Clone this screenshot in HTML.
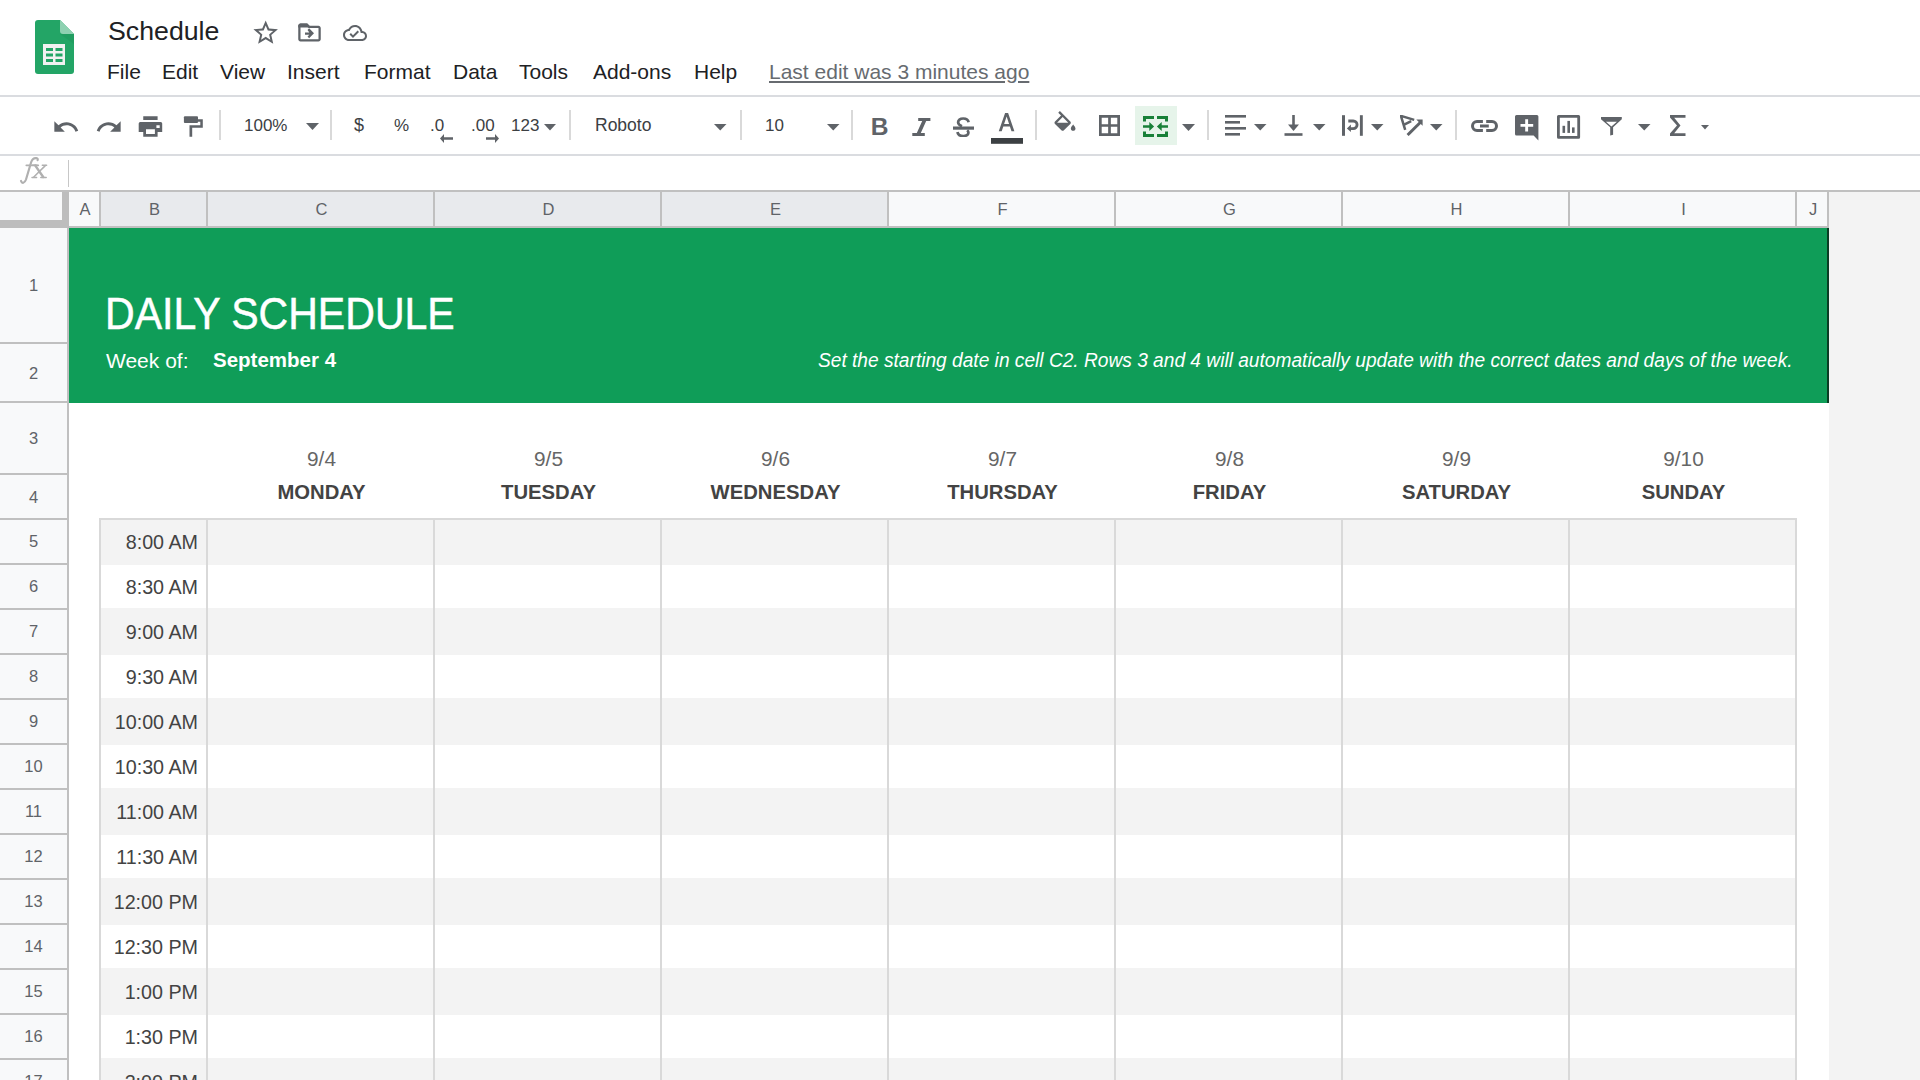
<!DOCTYPE html>
<html><head><meta charset="utf-8"><style>
html,body{margin:0;padding:0;}
body{width:1920px;height:1080px;overflow:hidden;position:relative;background:#fff;font-family:"Liberation Sans", sans-serif;}
.t{position:absolute;white-space:nowrap;}
.r{position:absolute;}
</style></head><body>
<svg class="r" style="left:35px;top:20px;" width="39" height="54" viewBox="0 0 39 54">
<path d="M3 0H25L39 14V51A3 3 0 0 1 36 54H3A3 3 0 0 1 0 51V3A3 3 0 0 1 3 0Z" fill="#23a566"/>
<path d="M25 0L39 14H28A3 3 0 0 1 25 11Z" fill="#8ed1b1"/>
<path d="M25 14L39 24V14Z" fill="#1e8e55" opacity="0.35"/>
<rect x="8" y="24" width="22" height="21" fill="#f1f1f1"/>
<rect x="11" y="28" width="7" height="3" fill="#23a566"/><rect x="20.5" y="28" width="7" height="3" fill="#23a566"/>
<rect x="11" y="33.5" width="7" height="3" fill="#23a566"/><rect x="20.5" y="33.5" width="7" height="3" fill="#23a566"/>
<rect x="11" y="39" width="7" height="3" fill="#23a566"/><rect x="20.5" y="39" width="7" height="3" fill="#23a566"/>
</svg>
<div class="t" style="left:108px;top:17.29px;font-size:26.2px;line-height:29.27px;color:#202124;transform:scaleX(1.02);transform-origin:left top;">Schedule</div>
<svg class="r" style="left:250.6px;top:17.5px;" width="29.4" height="29.4" viewBox="0 0 24 24"><path fill="#5f6368" d="M22 9.24l-7.19-.62L12 2 9.19 8.63 2 9.24l5.46 4.73L5.82 21 12 17.27 18.18 21l-1.63-7.03L22 9.24zM12 15.4l-3.76 2.27 1-4.28-3.32-2.88 4.38-.38L12 6.1l1.71 4.04 4.38.38-3.32 2.88 1 4.28L12 15.4z"/></svg>
<svg class="r" style="left:296.3px;top:19px;" width="27" height="27" viewBox="0 0 24 24"><path fill="#5f6368" d="M2 6c0-1.1.9-2 2-2h6l2 2v1.6H2z"/><path fill="#5f6368" d="M20 6h-8l-2-2H4c-1.1 0-1.99.9-1.99 2L2 18c0 1.1.9 2 2 2h16c1.1 0 2-.9 2-2V8c0-1.1-.9-2-2-2zm0 12H4V6h5.17l2 2H20v10zm-8.16-6H8v2h3.84l-1.59 1.59L11.66 17 16 12.66 11.66 8.3l-1.41 1.41L11.84 12z"/></svg>
<svg class="r" style="left:343px;top:21px;" width="24" height="24" viewBox="0 0 24 24"><path fill="#5f6368" d="M19.35 10.04C18.67 6.59 15.64 4 12 4 9.11 4 6.6 5.64 5.35 8.04 2.34 8.36 0 10.91 0 14c0 3.31 2.69 6 6 6h13c2.76 0 5-2.24 5-5 0-2.64-2.05-4.78-4.65-4.96zM19 18H6c-2.21 0-4-1.790-4-4 0-2.05 1.53-3.76 3.56-3.97l1.07-.11.5-.95C8.08 7.14 9.94 6 12 6c2.62 0 4.88 1.86 5.39 4.43l.3 1.5 1.530.11c1.56.1 2.78 1.41 2.78 2.96 0 1.65-1.35 3-3 3zm-9-3.82l-2.09-2.09L6.5 13.5 10 17l6.01-6.01-1.41-1.410z"/></svg>
<div class="t" style="left:107px;top:59.75px;font-size:21px;line-height:23.46px;color:#202124;">File</div>
<div class="t" style="left:162px;top:59.75px;font-size:21px;line-height:23.46px;color:#202124;">Edit</div>
<div class="t" style="left:220px;top:59.75px;font-size:21px;line-height:23.46px;color:#202124;">View</div>
<div class="t" style="left:287px;top:59.75px;font-size:21px;line-height:23.46px;color:#202124;">Insert</div>
<div class="t" style="left:364px;top:59.75px;font-size:21px;line-height:23.46px;color:#202124;">Format</div>
<div class="t" style="left:453px;top:59.75px;font-size:21px;line-height:23.46px;color:#202124;">Data</div>
<div class="t" style="left:519px;top:59.75px;font-size:21px;line-height:23.46px;color:#202124;">Tools</div>
<div class="t" style="left:593px;top:59.75px;font-size:21px;line-height:23.46px;color:#202124;">Add-ons</div>
<div class="t" style="left:694px;top:59.75px;font-size:21px;line-height:23.46px;color:#202124;">Help</div>
<div class="t" style="left:769px;top:59.75px;font-size:21px;line-height:23.46px;color:#676b70;text-decoration:underline;text-underline-offset:2px;">Last edit was 3 minutes ago</div>
<div class="r" style="left:0px;top:95px;width:1920px;height:2px;background:#dadce0;"></div>
<svg class="r" style="left:51.5px;top:112.6px;" width="28" height="28" viewBox="0 0 24 24"><path fill="#5f6368" d="M12.5 8c-2.65 0-5.05.99-6.9 2.6L2 7v9h9l-3.62-3.62c1.39-1.16 3.16-1.88 5.12-1.88 3.54 0 6.55 2.31 7.6 5.5l2.37-.78C21.08 11.03 17.15 8 12.5 8z"/></svg>
<svg class="r" style="left:95px;top:112.6px;" width="28" height="28" viewBox="0 0 24 24"><path fill="#5f6368" d="M18.4 10.6C16.55 8.99 14.15 8 11.5 8c-4.65 0-8.58 3.03-9.96 7.22L3.9 16c1.05-3.19 4.05-5.5 7.6-5.5 1.95 0 3.73.72 5.12 1.88L13 16h9V7l-3.6 3.6z"/></svg>
<svg class="r" style="left:138px;top:116px;" width="25" height="21" viewBox="0 0 25 21"><path fill="#5f6368" fill-rule="evenodd" d="M5.25 0.25H19.6V4H5.25ZM2.2 6.1H22.7A1.5 1.5 0 0 1 24.2 7.6V15.9H19.6V20.7H5.25V15.9H0.7V7.6A1.5 1.5 0 0 1 2.2 6.1ZM8 13.2V18H16.9V13.2ZM18.4 9.2V11.9H21.7V9.2Z"/></svg>
<svg class="r" style="left:183px;top:116px;" width="21" height="21" viewBox="0 0 21 21"><rect x="0.9" y="0.25" width="14.1" height="6.65" rx="1" fill="#5f6368"/><path fill="#5f6368" d="M15 3.2H19.8V11.7H9.2V20.7H6.5V9.2H17.3V5.7H15Z"/></svg>
<div class="r" style="left:219px;top:110px;width:2px;height:30px;background:#d9d9d9;"></div>
<div class="t" style="left:244px;top:116.02px;font-size:17px;line-height:18.99px;color:#3c4043;">100%</div>
<svg class="r" style="left:306px;top:123px;" width="13" height="7" viewBox="0 0 13 7"><path fill="#5f6368" d="M0 0H13L6.5 7Z"/></svg>
<div class="r" style="left:330px;top:110px;width:2px;height:30px;background:#d9d9d9;"></div>
<div class="t" style="left:354px;top:115.21px;font-size:18px;line-height:20.11px;color:#3c4043;">$</div>
<div class="t" style="left:394px;top:116.11px;font-size:17px;line-height:18.99px;color:#3c4043;">%</div>
<div class="t" style="left:430px;top:115.86px;font-size:17px;line-height:18.99px;color:#3c4043;">.0</div>
<svg class="r" style="left:440px;top:134px;" width="14" height="9" viewBox="0 0 14 9"><path fill="#5f6368" d="M4 0L0 4.5 4 9V5.8H13V3.2H4Z"/></svg>
<div class="t" style="left:471px;top:115.86px;font-size:17px;line-height:18.99px;color:#3c4043;">.00</div>
<svg class="r" style="left:485px;top:134px;" width="14" height="9" viewBox="0 0 14 9"><path fill="#5f6368" d="M10 0L14 4.5 10 9V5.8H1V3.2H10Z"/></svg>
<div class="t" style="left:511px;top:115.86px;font-size:17px;line-height:18.99px;color:#3c4043;">123</div>
<svg class="r" style="left:544px;top:124px;" width="12" height="6.5" viewBox="0 0 12 6.5"><path fill="#5f6368" d="M0 0H12L6.0 6.5Z"/></svg>
<div class="r" style="left:569px;top:110px;width:2px;height:30px;background:#d9d9d9;"></div>
<div class="t" style="left:595px;top:115.56px;font-size:17.5px;line-height:19.55px;color:#3c4043;">Roboto</div>
<svg class="r" style="left:714px;top:124px;" width="12.5" height="6.6" viewBox="0 0 12.5 6.6"><path fill="#5f6368" d="M0 0H12.5L6.25 6.6Z"/></svg>
<div class="r" style="left:740px;top:110px;width:2px;height:30px;background:#d9d9d9;"></div>
<div class="t" style="left:765px;top:116.02px;font-size:17px;line-height:18.99px;color:#3c4043;">10</div>
<svg class="r" style="left:827px;top:124px;" width="12.5" height="6.6" viewBox="0 0 12.5 6.6"><path fill="#5f6368" d="M0 0H12.5L6.25 6.6Z"/></svg>
<div class="r" style="left:851px;top:110px;width:2px;height:30px;background:#d9d9d9;"></div>
<div class="t" style="left:870.8px;top:113.14px;font-size:24.6px;line-height:27.48px;color:#5f6368;font-weight:bold;">B</div>
<svg class="r" style="left:912px;top:117.5px;" width="19" height="18" viewBox="0 0 19 18"><path fill="#5f6368" d="M6.2 0H18.4V2.9H14.2L8.8 15H12.8V17.9H0.3V15H4.8L10.2 2.9H6.2Z"/></svg>
<svg class="r" style="left:953px;top:117px;" width="21" height="20" viewBox="0 0 21 20"><g fill="none" stroke="#5f6368" stroke-width="2.7"><path d="M15.6 5.3C15.2 2.7 13.2 1.5 10.2 1.5 7 1.5 5.1 3.1 5.1 5.3 5.1 7.3 6.6 8.3 9 9.2"/><path d="M14.2 13.2C15 13.9 15.4 14.7 15.4 15.6 15.4 17.8 13.4 19 10.3 19 6.9 19 4.9 17.6 4.5 15"/></g><rect x="0" y="9.5" width="21" height="3.2" fill="#5f6368"/></svg>
<svg class="r" style="left:991px;top:111px;" width="32" height="33" viewBox="0 0 32 33"><path fill="#5f6368" fill-rule="evenodd" d="M14.1 2H17.1L23.4 20.25H20.5L18.9 15.4H12.3L10.7 20.25H7.75ZM13.1 12.9H18.1L15.6 5.4Z"/><rect x="0" y="27" width="32" height="5.8" fill="#3c4043"/></svg>
<div class="r" style="left:1035px;top:110px;width:2px;height:30px;background:#d9d9d9;"></div>
<svg class="r" style="left:1050.5px;top:111.1px;" width="28" height="28" viewBox="0 0 24 24"><path fill="#5f6368" d="M16.56 8.94L7.62 0 6.21 1.41l2.38 2.38-5.15 5.15c-.59.59-.59 1.54 0 2.12l5.5 5.5c.29.29.68.44 1.06.44s.77-.15 1.06-.44l5.5-5.5c.59-.58.59-1.53 0-2.12zM5.21 10L10 5.21 14.79 10H5.21zM19 11.5s-2 2.17-2 3.5c0 1.1.9 2 2 2s2-.9 2-2c0-1.33-2-3.5-2-3.5z"/></svg>
<svg class="r" style="left:1099px;top:115px;" width="21" height="21" viewBox="0 0 21 21"><path fill="#5f6368" fill-rule="evenodd" d="M0 0H21V21H0ZM2.7 2.7V9.15H9.15V2.7ZM11.85 2.7V9.15H18.3V2.7ZM2.7 11.85V18.3H9.15V11.85ZM11.85 11.85V18.3H18.3V11.85Z"/></svg>
<div class="r" style="left:1135px;top:106px;width:42px;height:39px;background:#e6f4ea;"></div>
<svg class="r" style="left:1143px;top:116px;" width="25" height="21" viewBox="0 0 25 21"><g fill="#188038">
<path d="M0 0H11V3H3V5.4H0Z"/><path d="M25 0H14V3H22V5.4H25Z"/>
<path d="M0 21H11V18H3V15.4H0Z"/><path d="M25 21H14V18H22V15.4H25Z"/>
<path d="M0 9.2H6.3V6L11.1 10.5 6.3 15V11.8H0Z"/><path d="M25 9.2H18.7V6L13.9 10.5 18.7 15V11.8H25Z"/>
</g></svg>
<svg class="r" style="left:1182px;top:124px;" width="13" height="7" viewBox="0 0 13 7"><path fill="#5f6368" d="M0 0H13L6.5 7Z"/></svg>
<div class="r" style="left:1207px;top:110px;width:2px;height:30px;background:#d9d9d9;"></div>
<svg class="r" style="left:1225px;top:115px;" width="21" height="21" viewBox="0 0 21 21"><g fill="#5f6368"><rect x="0" y="0" width="21" height="2.6"/><rect x="0" y="6" width="15" height="2.6"/><rect x="0" y="12" width="21" height="2.6"/><rect x="0" y="18" width="15" height="2.6"/></g></svg>
<svg class="r" style="left:1254px;top:124px;" width="12.5" height="6.6" viewBox="0 0 12.5 6.6"><path fill="#5f6368" d="M0 0H12.5L6.25 6.6Z"/></svg>
<svg class="r" style="left:1284px;top:115px;" width="19" height="21" viewBox="0 0 19 21"><g fill="#5f6368"><rect x="8.2" y="0" width="2.6" height="11"/><path d="M4 9.5H15L9.5 16Z"/><rect x="0.5" y="18.2" width="18" height="2.6"/></g></svg>
<svg class="r" style="left:1313px;top:124px;" width="12.5" height="6.6" viewBox="0 0 12.5 6.6"><path fill="#5f6368" d="M0 0H12.5L6.25 6.6Z"/></svg>
<svg class="r" style="left:1342px;top:115px;" width="21" height="21" viewBox="0 0 21 21"><g fill="#5f6368"><rect x="0" y="0.2" width="3" height="20.6"/><rect x="17.9" y="0.2" width="2.9" height="20.6"/><path d="M6.3 4.6H11.3A5.2 5.2 0 0 1 11.3 15H8.9V17L4.9 13.4 8.9 9.5V12.2H11.3A2.4 2.4 0 0 0 11.3 7.4H6.3Z"/></g></svg>
<svg class="r" style="left:1371px;top:124px;" width="12.5" height="6.6" viewBox="0 0 12.5 6.6"><path fill="#5f6368" d="M0 0H12.5L6.25 6.6Z"/></svg>
<svg class="r" style="left:1400px;top:115px;" width="23" height="21" viewBox="0 0 23 21"><g fill="none" stroke="#5f6368" stroke-width="2.5" stroke-linejoin="miter"><path d="M5.2 14.8L0.9 0.9 14.2 4.9"/><path d="M4.2 9.6L11.2 6.2"/><path d="M7.6 20L20.5 7.2" stroke-width="3"/></g><path fill="#5f6368" d="M16.3 4.5H22.6V10.8Z"/></svg>
<svg class="r" style="left:1430px;top:124px;" width="12.5" height="6.6" viewBox="0 0 12.5 6.6"><path fill="#5f6368" d="M0 0H12.5L6.25 6.6Z"/></svg>
<div class="r" style="left:1455px;top:110px;width:2px;height:30px;background:#d9d9d9;"></div>
<svg class="r" style="left:1471px;top:120.4px;" width="27" height="12" viewBox="0 0 27 12"><g fill="none" stroke="#5f6368" stroke-width="3"><path d="M11.9 1.5H6A4.5 4.5 0 0 0 6 10.5H11.9"/><path d="M15.2 1.5H21A4.5 4.5 0 0 1 21 10.5H15.2"/><path d="M9 6H17.8"/></g></svg>
<svg class="r" style="left:1514.8px;top:114.5px;" width="24" height="26" viewBox="0 0 24 26"><path fill="#5f6368" d="M1.5 0H21.9A1.5 1.5 0 0 1 23.4 1.5V25.4L18.6 20.5H1.5A1.5 1.5 0 0 1 0 19V1.5A1.5 1.5 0 0 1 1.5 0Z"/><path fill="#fff" d="M10.2 4.2H13.1V8.9H18.2V11.8H13.1V16.6H10.2V11.8H5.5V8.9H10.2Z"/></svg>
<svg class="r" style="left:1556.8px;top:114.5px;" width="24" height="24" viewBox="0 0 24 24"><path fill="#5f6368" fill-rule="evenodd" d="M1.5 0H21.6A1.5 1.5 0 0 1 23.1 1.5V22.3A1.5 1.5 0 0 1 21.6 23.8H1.5A1.5 1.5 0 0 1 0 22.3V1.5A1.5 1.5 0 0 1 1.5 0ZM2.8 2.8V21H20.3V2.8Z"/><g fill="#5f6368"><rect x="5.5" y="10.8" width="2.6" height="7.1"/><rect x="10.4" y="5.9" width="2.6" height="12"/><rect x="15" y="12.4" width="2.6" height="5.5"/></g></svg>
<svg class="r" style="left:1601px;top:117px;" width="21" height="19" viewBox="0 0 21 19"><path fill="#5f6368" fill-rule="evenodd" d="M0 0H20.8V2.2L12.1 10.2V17.8L9.2 18.5V10.2L0 2.2ZM4.9 4.7H15.9L10.4 9.6Z"/></svg>
<svg class="r" style="left:1638px;top:124px;" width="12.5" height="6.6" viewBox="0 0 12.5 6.6"><path fill="#5f6368" d="M0 0H12.5L6.25 6.6Z"/></svg>
<svg class="r" style="left:1670px;top:115px;" width="16" height="21" viewBox="0 0 16 21"><path fill="#5f6368" d="M0 0H15.5V2.8H4.2L10.5 10.5 4.2 18.2H15.5V21H0V18.6L7 10.5 0 2.4Z"/></svg>
<svg class="r" style="left:1701px;top:125px;" width="8" height="4.6" viewBox="0 0 8 4.6"><path fill="#5f6368" d="M0 0H8L4.0 4.6Z"/></svg>
<div class="r" style="left:0px;top:154px;width:1920px;height:2px;background:#dadce0;"></div>
<svg class="r" style="left:0px;top:150px;" width="70" height="40" viewBox="0 150 70 40"><g fill="none" stroke="#b0b0b0" stroke-linecap="round"><path stroke-width="2.2" d="M21 181C22 183.8 24.6 183.4 26 179.5L31.2 162C32.3 158.8 34.3 157.8 36.4 158.1 37.6 158.3 38 159.2 37.6 160.2"/><path stroke-width="1.7" d="M26.3 165.3H38.3"/><path stroke-width="2.4" d="M35.3 165.6L43.2 177"/><path stroke-width="1.5" d="M45.3 165.6L33.8 177"/><path stroke-width="1.5" d="M32.5 165.3H37M42.3 165.3H46.6M32 177.4H36.6M40.8 177.4H46.2"/></g></svg>
<div class="r" style="left:68px;top:160px;width:1px;height:27px;background:#c7c7c7;"></div>
<div class="r" style="left:0px;top:192px;width:1920px;height:34px;background:#f8f9fa;"></div>
<div class="r" style="left:0px;top:190px;width:1920px;height:2px;background:#c0c0c0;"></div>
<div class="r" style="left:1829px;top:192px;width:91px;height:888px;background:#f3f3f3;"></div>
<div class="r" style="left:99px;top:192px;width:2px;height:34px;background:#c0c0c0;"></div>
<div class="t" style="left:70px;top:199.57px;font-size:16.5px;line-height:18.43px;color:#5f6368;width:30px;text-align:center;">A</div>
<div class="r" style="left:101px;top:192px;width:105px;height:34px;background:#e8eaed;"></div>
<div class="r" style="left:206px;top:192px;width:2px;height:34px;background:#c0c0c0;"></div>
<div class="t" style="left:102px;top:199.57px;font-size:16.5px;line-height:18.43px;color:#5f6368;width:105px;text-align:center;">B</div>
<div class="r" style="left:208px;top:192px;width:225px;height:34px;background:#e8eaed;"></div>
<div class="r" style="left:433px;top:192px;width:2px;height:34px;background:#c0c0c0;"></div>
<div class="t" style="left:209px;top:199.57px;font-size:16.5px;line-height:18.43px;color:#5f6368;width:225px;text-align:center;">C</div>
<div class="r" style="left:435px;top:192px;width:225px;height:34px;background:#e8eaed;"></div>
<div class="r" style="left:660px;top:192px;width:2px;height:34px;background:#c0c0c0;"></div>
<div class="t" style="left:436px;top:199.57px;font-size:16.5px;line-height:18.43px;color:#5f6368;width:225px;text-align:center;">D</div>
<div class="r" style="left:662px;top:192px;width:225px;height:34px;background:#e8eaed;"></div>
<div class="r" style="left:887px;top:192px;width:2px;height:34px;background:#c0c0c0;"></div>
<div class="t" style="left:663px;top:199.57px;font-size:16.5px;line-height:18.43px;color:#5f6368;width:225px;text-align:center;">E</div>
<div class="r" style="left:1114px;top:192px;width:2px;height:34px;background:#c0c0c0;"></div>
<div class="t" style="left:890px;top:199.57px;font-size:16.5px;line-height:18.43px;color:#5f6368;width:225px;text-align:center;">F</div>
<div class="r" style="left:1341px;top:192px;width:2px;height:34px;background:#c0c0c0;"></div>
<div class="t" style="left:1117px;top:199.57px;font-size:16.5px;line-height:18.43px;color:#5f6368;width:225px;text-align:center;">G</div>
<div class="r" style="left:1568px;top:192px;width:2px;height:34px;background:#c0c0c0;"></div>
<div class="t" style="left:1344px;top:199.57px;font-size:16.5px;line-height:18.43px;color:#5f6368;width:225px;text-align:center;">H</div>
<div class="r" style="left:1795px;top:192px;width:2px;height:34px;background:#c0c0c0;"></div>
<div class="t" style="left:1571px;top:199.57px;font-size:16.5px;line-height:18.43px;color:#5f6368;width:225px;text-align:center;">I</div>
<div class="r" style="left:1827px;top:192px;width:2px;height:34px;background:#c0c0c0;"></div>
<div class="t" style="left:1798px;top:199.57px;font-size:16.5px;line-height:18.43px;color:#5f6368;width:30px;text-align:center;">J</div>
<div class="r" style="left:0px;top:226px;width:1829px;height:2px;background:#c0c0c0;"></div>
<div class="r" style="left:0px;top:228px;width:67px;height:852px;background:#f8f9fa;"></div>
<div class="r" style="left:67px;top:228px;width:2px;height:852px;background:#c0c0c0;"></div>
<div class="r" style="left:0px;top:342px;width:67px;height:2px;background:#c0c0c0;"></div>
<div class="t" style="left:0px;top:275.57px;font-size:16.5px;line-height:18.43px;color:#5f6368;width:67px;text-align:center;">1</div>
<div class="r" style="left:0px;top:401px;width:67px;height:2px;background:#c0c0c0;"></div>
<div class="t" style="left:0px;top:363.57px;font-size:16.5px;line-height:18.43px;color:#5f6368;width:67px;text-align:center;">2</div>
<div class="r" style="left:0px;top:473px;width:67px;height:2px;background:#c0c0c0;"></div>
<div class="t" style="left:0px;top:429.07px;font-size:16.5px;line-height:18.43px;color:#5f6368;width:67px;text-align:center;">3</div>
<div class="r" style="left:0px;top:518px;width:67px;height:2px;background:#c0c0c0;"></div>
<div class="t" style="left:0px;top:487.57px;font-size:16.5px;line-height:18.43px;color:#5f6368;width:67px;text-align:center;">4</div>
<div class="r" style="left:0px;top:563px;width:67px;height:2px;background:#c0c0c0;"></div>
<div class="t" style="left:0px;top:531.57px;font-size:16.5px;line-height:18.43px;color:#5f6368;width:67px;text-align:center;">5</div>
<div class="r" style="left:0px;top:608px;width:67px;height:2px;background:#c0c0c0;"></div>
<div class="t" style="left:0px;top:576.57px;font-size:16.5px;line-height:18.43px;color:#5f6368;width:67px;text-align:center;">6</div>
<div class="r" style="left:0px;top:653px;width:67px;height:2px;background:#c0c0c0;"></div>
<div class="t" style="left:0px;top:621.57px;font-size:16.5px;line-height:18.43px;color:#5f6368;width:67px;text-align:center;">7</div>
<div class="r" style="left:0px;top:698px;width:67px;height:2px;background:#c0c0c0;"></div>
<div class="t" style="left:0px;top:666.57px;font-size:16.5px;line-height:18.43px;color:#5f6368;width:67px;text-align:center;">8</div>
<div class="r" style="left:0px;top:743px;width:67px;height:2px;background:#c0c0c0;"></div>
<div class="t" style="left:0px;top:711.57px;font-size:16.5px;line-height:18.43px;color:#5f6368;width:67px;text-align:center;">9</div>
<div class="r" style="left:0px;top:788px;width:67px;height:2px;background:#c0c0c0;"></div>
<div class="t" style="left:0px;top:756.57px;font-size:16.5px;line-height:18.43px;color:#5f6368;width:67px;text-align:center;">10</div>
<div class="r" style="left:0px;top:833px;width:67px;height:2px;background:#c0c0c0;"></div>
<div class="t" style="left:0px;top:801.57px;font-size:16.5px;line-height:18.43px;color:#5f6368;width:67px;text-align:center;">11</div>
<div class="r" style="left:0px;top:878px;width:67px;height:2px;background:#c0c0c0;"></div>
<div class="t" style="left:0px;top:846.57px;font-size:16.5px;line-height:18.43px;color:#5f6368;width:67px;text-align:center;">12</div>
<div class="r" style="left:0px;top:923px;width:67px;height:2px;background:#c0c0c0;"></div>
<div class="t" style="left:0px;top:891.57px;font-size:16.5px;line-height:18.43px;color:#5f6368;width:67px;text-align:center;">13</div>
<div class="r" style="left:0px;top:968px;width:67px;height:2px;background:#c0c0c0;"></div>
<div class="t" style="left:0px;top:936.57px;font-size:16.5px;line-height:18.43px;color:#5f6368;width:67px;text-align:center;">14</div>
<div class="r" style="left:0px;top:1013px;width:67px;height:2px;background:#c0c0c0;"></div>
<div class="t" style="left:0px;top:981.57px;font-size:16.5px;line-height:18.43px;color:#5f6368;width:67px;text-align:center;">15</div>
<div class="r" style="left:0px;top:1058px;width:67px;height:2px;background:#c0c0c0;"></div>
<div class="t" style="left:0px;top:1026.57px;font-size:16.5px;line-height:18.43px;color:#5f6368;width:67px;text-align:center;">16</div>
<div class="r" style="left:0px;top:1103px;width:67px;height:2px;background:#c0c0c0;"></div>
<div class="t" style="left:0px;top:1071.57px;font-size:16.5px;line-height:18.43px;color:#5f6368;width:67px;text-align:center;">17</div>
<div class="r" style="left:62px;top:192px;width:7px;height:36px;background:#bdbdbd;"></div>
<div class="r" style="left:0px;top:220px;width:69px;height:8px;background:#bdbdbd;"></div>
<div class="r" style="left:69px;top:228px;width:1760px;height:852px;background:#ffffff;"></div>
<div class="r" style="left:69px;top:228px;width:1759px;height:175px;background:#0f9d58;"></div>
<div class="r" style="left:1827px;top:228px;width:2px;height:175px;background:#0b3d24;"></div>
<div class="t" style="left:104.6px;top:289.27px;font-size:45px;line-height:50.27px;color:#ffffff;transform:scaleX(0.912);transform-origin:left top;-webkit-text-stroke:0.5px #fff;">DAILY SCHEDULE</div>
<div class="t" style="left:106px;top:348.50px;font-size:21px;line-height:23.46px;color:#ffffff;">Week of:</div>
<div class="t" style="left:213px;top:348.95px;font-size:20.5px;line-height:22.90px;color:#ffffff;font-weight:bold;">September 4</div>
<div class="t" style="left:818px;top:348.60px;font-size:20px;line-height:22.34px;color:#ffffff;font-style:italic;transform:scaleX(0.957);transform-origin:left top;">Set the starting date in cell C2. Rows 3 and 4 will automatically update with the correct dates and days of the week.</div>
<div class="t" style="left:209px;top:447.90px;font-size:20px;line-height:22.34px;color:#666666;width:225px;text-align:center;transform:scaleX(1.04);transform-origin:center top;">9/4</div>
<div class="t" style="left:209px;top:480.00px;font-size:21px;line-height:23.46px;color:#434343;font-weight:bold;width:225px;text-align:center;transform:scaleX(0.965);transform-origin:center top;">MONDAY</div>
<div class="t" style="left:436px;top:447.90px;font-size:20px;line-height:22.34px;color:#666666;width:225px;text-align:center;transform:scaleX(1.04);transform-origin:center top;">9/5</div>
<div class="t" style="left:436px;top:480.00px;font-size:21px;line-height:23.46px;color:#434343;font-weight:bold;width:225px;text-align:center;transform:scaleX(0.965);transform-origin:center top;">TUESDAY</div>
<div class="t" style="left:663px;top:447.90px;font-size:20px;line-height:22.34px;color:#666666;width:225px;text-align:center;transform:scaleX(1.04);transform-origin:center top;">9/6</div>
<div class="t" style="left:663px;top:480.00px;font-size:21px;line-height:23.46px;color:#434343;font-weight:bold;width:225px;text-align:center;transform:scaleX(0.965);transform-origin:center top;">WEDNESDAY</div>
<div class="t" style="left:890px;top:447.90px;font-size:20px;line-height:22.34px;color:#666666;width:225px;text-align:center;transform:scaleX(1.04);transform-origin:center top;">9/7</div>
<div class="t" style="left:890px;top:480.00px;font-size:21px;line-height:23.46px;color:#434343;font-weight:bold;width:225px;text-align:center;transform:scaleX(0.965);transform-origin:center top;">THURSDAY</div>
<div class="t" style="left:1117px;top:447.90px;font-size:20px;line-height:22.34px;color:#666666;width:225px;text-align:center;transform:scaleX(1.04);transform-origin:center top;">9/8</div>
<div class="t" style="left:1117px;top:480.00px;font-size:21px;line-height:23.46px;color:#434343;font-weight:bold;width:225px;text-align:center;transform:scaleX(0.965);transform-origin:center top;">FRIDAY</div>
<div class="t" style="left:1344px;top:447.90px;font-size:20px;line-height:22.34px;color:#666666;width:225px;text-align:center;transform:scaleX(1.04);transform-origin:center top;">9/9</div>
<div class="t" style="left:1344px;top:480.00px;font-size:21px;line-height:23.46px;color:#434343;font-weight:bold;width:225px;text-align:center;transform:scaleX(0.965);transform-origin:center top;">SATURDAY</div>
<div class="t" style="left:1571px;top:447.90px;font-size:20px;line-height:22.34px;color:#666666;width:225px;text-align:center;transform:scaleX(1.04);transform-origin:center top;">9/10</div>
<div class="t" style="left:1571px;top:480.00px;font-size:21px;line-height:23.46px;color:#434343;font-weight:bold;width:225px;text-align:center;transform:scaleX(0.965);transform-origin:center top;">SUNDAY</div>
<div class="r" style="left:101px;top:520px;width:1695px;height:44.5px;background:#f3f3f3;"></div>
<div class="t" style="left:0px;top:531.20px;font-size:20px;line-height:22.34px;color:#434343;width:198px;text-align:right;transform:scaleX(0.985);transform-origin:right top;">8:00 AM</div>
<div class="t" style="left:0px;top:576.20px;font-size:20px;line-height:22.34px;color:#434343;width:198px;text-align:right;transform:scaleX(0.985);transform-origin:right top;">8:30 AM</div>
<div class="r" style="left:101px;top:608px;width:1695px;height:46.5px;background:#f3f3f3;"></div>
<div class="t" style="left:0px;top:621.20px;font-size:20px;line-height:22.34px;color:#434343;width:198px;text-align:right;transform:scaleX(0.985);transform-origin:right top;">9:00 AM</div>
<div class="t" style="left:0px;top:666.20px;font-size:20px;line-height:22.34px;color:#434343;width:198px;text-align:right;transform:scaleX(0.985);transform-origin:right top;">9:30 AM</div>
<div class="r" style="left:101px;top:698px;width:1695px;height:46.5px;background:#f3f3f3;"></div>
<div class="t" style="left:0px;top:711.20px;font-size:20px;line-height:22.34px;color:#434343;width:198px;text-align:right;transform:scaleX(0.985);transform-origin:right top;">10:00 AM</div>
<div class="t" style="left:0px;top:756.20px;font-size:20px;line-height:22.34px;color:#434343;width:198px;text-align:right;transform:scaleX(0.985);transform-origin:right top;">10:30 AM</div>
<div class="r" style="left:101px;top:788px;width:1695px;height:46.5px;background:#f3f3f3;"></div>
<div class="t" style="left:0px;top:801.20px;font-size:20px;line-height:22.34px;color:#434343;width:198px;text-align:right;transform:scaleX(0.985);transform-origin:right top;">11:00 AM</div>
<div class="t" style="left:0px;top:846.20px;font-size:20px;line-height:22.34px;color:#434343;width:198px;text-align:right;transform:scaleX(0.985);transform-origin:right top;">11:30 AM</div>
<div class="r" style="left:101px;top:878px;width:1695px;height:46.5px;background:#f3f3f3;"></div>
<div class="t" style="left:0px;top:891.20px;font-size:20px;line-height:22.34px;color:#434343;width:198px;text-align:right;transform:scaleX(0.985);transform-origin:right top;">12:00 PM</div>
<div class="t" style="left:0px;top:936.20px;font-size:20px;line-height:22.34px;color:#434343;width:198px;text-align:right;transform:scaleX(0.985);transform-origin:right top;">12:30 PM</div>
<div class="r" style="left:101px;top:968px;width:1695px;height:46.5px;background:#f3f3f3;"></div>
<div class="t" style="left:0px;top:981.20px;font-size:20px;line-height:22.34px;color:#434343;width:198px;text-align:right;transform:scaleX(0.985);transform-origin:right top;">1:00 PM</div>
<div class="t" style="left:0px;top:1026.20px;font-size:20px;line-height:22.34px;color:#434343;width:198px;text-align:right;transform:scaleX(0.985);transform-origin:right top;">1:30 PM</div>
<div class="r" style="left:101px;top:1058px;width:1695px;height:46.5px;background:#f3f3f3;"></div>
<div class="t" style="left:0px;top:1071.20px;font-size:20px;line-height:22.34px;color:#434343;width:198px;text-align:right;transform:scaleX(0.985);transform-origin:right top;">2:00 PM</div>
<div class="r" style="left:99px;top:518px;width:1697px;height:2px;background:#d9d9d9;"></div>
<div class="r" style="left:99px;top:518px;width:2px;height:562px;background:#d9d9d9;"></div>
<div class="r" style="left:206px;top:518px;width:2px;height:562px;background:#d9d9d9;"></div>
<div class="r" style="left:433px;top:518px;width:2px;height:562px;background:#d9d9d9;"></div>
<div class="r" style="left:660px;top:518px;width:2px;height:562px;background:#d9d9d9;"></div>
<div class="r" style="left:887px;top:518px;width:2px;height:562px;background:#d9d9d9;"></div>
<div class="r" style="left:1114px;top:518px;width:2px;height:562px;background:#d9d9d9;"></div>
<div class="r" style="left:1341px;top:518px;width:2px;height:562px;background:#d9d9d9;"></div>
<div class="r" style="left:1568px;top:518px;width:2px;height:562px;background:#d9d9d9;"></div>
<div class="r" style="left:1795px;top:518px;width:2px;height:562px;background:#d9d9d9;"></div>
</body></html>
